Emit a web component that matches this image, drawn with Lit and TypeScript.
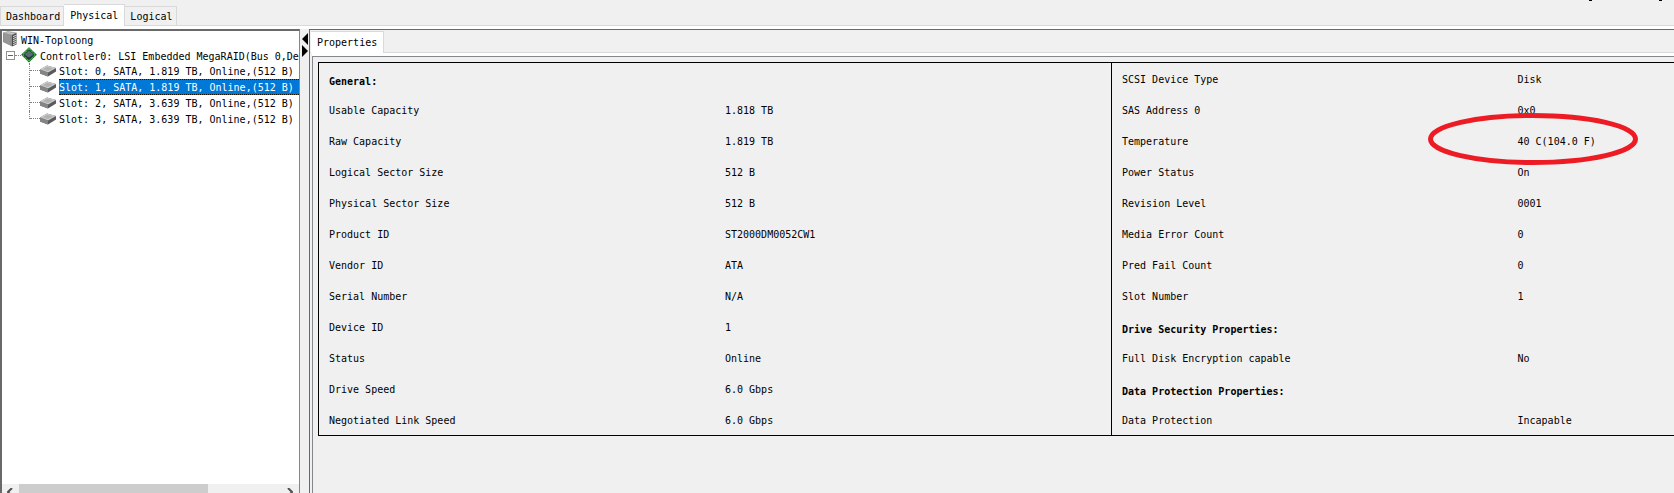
import { LitElement, html, css } from "lit";
import { customElement, state } from "lit/decorators.js";

type Row = { label: string; value?: string; heading?: boolean; marked?: boolean };

const GENERAL: Row[] = [
  { label: "General:", heading: true },
  { label: "Usable Capacity", value: "1.818 TB" },
  { label: "Raw Capacity", value: "1.819 TB" },
  { label: "Logical Sector Size", value: "512 B" },
  { label: "Physical Sector Size", value: "512 B" },
  { label: "Product ID", value: "ST2000DM0052CW1" },
  { label: "Vendor ID", value: "ATA" },
  { label: "Serial Number", value: "N/A" },
  { label: "Device ID", value: "1" },
  { label: "Status", value: "Online" },
  { label: "Drive Speed", value: "6.0 Gbps" },
  { label: "Negotiated Link Speed", value: "6.0 Gbps" },
];

const DETAILS: Row[] = [
  { label: "SCSI Device Type", value: "Disk" },
  { label: "SAS Address 0", value: "0x0" },
  { label: "Temperature", value: "40 C(104.0 F)", marked: true },
  { label: "Power Status", value: "On" },
  { label: "Revision Level", value: "0001" },
  { label: "Media Error Count", value: "0" },
  { label: "Pred Fail Count", value: "0" },
  { label: "Slot Number", value: "1" },
  { label: "Drive Security Properties:", heading: true },
  { label: "Full Disk Encryption capable", value: "No" },
  { label: "Data Protection Properties:", heading: true },
  { label: "Data Protection", value: "Incapable" },
];

const SLOTS = [
  "Slot: 0, SATA, 1.819 TB, Online,(512 B)",
  "Slot: 1, SATA, 1.819 TB, Online,(512 B)",
  "Slot: 2, SATA, 3.639 TB, Online,(512 B)",
  "Slot: 3, SATA, 3.639 TB, Online,(512 B)",
];

const serverIcon = html`<svg width="16" height="16" viewBox="0 0 16 16" aria-hidden="true">
  <path d="M1 2 6 .5 14.500 2 10 4Z" fill="#c6c6c6" stroke="#777" stroke-width=".5" />
  <path d="M1 2 10 4V15.500L1 11Z" fill="#8e8e8e" />
  <path d="M10 4 14.500 2V13.500L10 15.500Z" fill="#4c4c4c" />
  <path d="M11 5.500 14 4.500M11 7.500 14 6.500M11 9.500 14 8.500M11 11.500 14 10.500M11 13.500 14 12.500" stroke="#dedede" />
  <path d="M3 3V11.500M5 3.500V12.500M7 4V13.500" stroke="#a8a8a8" stroke-width=".7" />
</svg>`;

const chipIcon = html`<svg width="16" height="16" viewBox="0 0 16 16" aria-hidden="true">
  <path d="M8 .3 15.800 7.700 8 15.500 .2 7.700Z" fill="#174a1d" />
  <path d="M8 1.500 14.500 7.700 8 14.200 1.500 7.700Z" fill="none" stroke="#43b049" stroke-width="1.400" stroke-dasharray="2.500 .6" />
  <path d="M8 3.500 12.500 7.500V8.500L8 12.500 3.500 8.500V7.500Z" fill="#26383c" />
  <path d="M8 3.500 12.500 7.500 8 10.500 3.500 7.500Z" fill="#566d72" />
</svg>`;

const driveIcon = html`<svg width="16" height="12" viewBox="0 0 16 12" aria-hidden="true">
  <path d="M0 4.500 7 .5 16 3V6.500L8 11.500 0 8.500Z" fill="#5a5a5a" />
  <path d="M0 4.500 7 .5 16 3 8 7.500Z" fill="#d0d0d0" />
  <path d="M2.500 4.500 7.300 1.600 13.300 3.200 8 6.200Z" fill="#b2b2b2" />
  <path d="M0 4.500 8 7.500V11.500L0 8.500Z" fill="#858585" />
</svg>`;

@customElement("app-root")
export class AppRoot extends LitElement {
  @state() private selected = 1;

  static styles = css`
    :host {
      display: flex;
      flex-direction: column;
      height: 100vh;
      overflow: hidden;
      background: #f0f0f0;
      color: #000;
      font: 10px/16px "DejaVu Sans Mono", "Liberation Mono", monospace;
    }
    *, *::before { box-sizing: border-box; }
    button { font: inherit; color: inherit; margin: 0; }
    svg { display: block; flex: none; }
    .tabs {
      display: flex;
      align-items: flex-end;
      flex: none;
      border-bottom: 1px solid #d9d9d9;
    }
    .main-tabs { height: 26px; }
    .tab {
      height: 19px;
      padding: 2px 3px 0 5px;
      border: 1px solid #d9d9d9;
      border-bottom: 0;
      border-left-width: 0;
      background: #f0f0f0;
    }
    .tab:first-child { border-left-width: 1px; }
    .tab.active {
      height: 22px;
      padding: 0 6px;
      margin-bottom: -1px;
      background: #fff;
    }
    .edge-marks { align-self: flex-start; margin-left: auto; padding-right: 12px; display: flex; gap: 67px; }
    .edge-mark { width: 3px; height: 1px; background: #000; }
    .workspace {
      flex: 1;
      min-height: 0;
      display: grid;
      grid-template-columns: 300px 9px minmax(0, 1fr);
      border-top: 3px solid #fff;
    }
    .tree-panel {
      display: flex;
      flex-direction: column;
      min-width: 0;
      overflow: hidden;
      background: #fff;
      border: solid #696969;
      border-width: 2px 1px 0 2px;
      border-right-color: #828790;
    }
    .tree { flex: 1; margin: 0; padding: 0; list-style: none; white-space: nowrap; }
    .node { display: flex; align-items: center; height: 16px; }
    .root-label { padding: 3px 0 0 3px; }
    .controller { padding-left: 4px; }
    .toggle {
      width: 9px;
      height: 9px;
      flex: none;
      padding: 0;
      border: 1px solid #919191;
      background: linear-gradient(#4b63a7, #4b63a7) center / 5px 1px no-repeat #fff;
    }
    .stem { width: 6px; flex: none; border-top: 1px dotted #808080; }
    .controller-label { flex: 1; min-width: 0; overflow: hidden; padding: 3px 0 0 3px; }
    .slots { margin: 0; padding: 0 0 0 27px; list-style: none; }
    .branch { align-self: stretch; width: 11px; flex: none; display: grid; grid-template-rows: 8px 8px; border-left: 1px dotted #808080; }
    .branch::before { content: ""; border-bottom: 1px dotted #808080; }
    .slot:last-child .branch { align-self: flex-start; height: 8px; }
    .slot-button {
      flex: 1;
      height: 16px;
      margin-left: 3px;
      padding: 2px 0 0;
      border: 1px solid transparent;
      border-left: 0;
      border-right: 0;
      background: none;
      line-height: 12px;
      text-align: left;
      white-space: nowrap;
    }
    .slot-button.selected { background: #0078d7; color: #fff; border-color: #201000; border-style: dotted; }
    .scrollbar { display: flex; flex: none; height: 9px; background: #f0f0f0; overflow: hidden; }
    .arrow { width: 17px; height: 17px; flex: none; padding: 4px 5px; border: 0; background: none; }
    .track { flex: 1; }
    .thumb { width: 72%; height: 17px; background: #cdcdcd; }
    .divider { display: flex; flex-direction: column; padding: 4px 0 0 2px; }
    .collapse { width: 6px; height: 12px; padding: 0; border: 0; background: none; }
    .detail {
      display: flex;
      flex-direction: column;
      min-width: 0;
      border: solid #696969;
      border-width: 1px 0 0 1px;
    }
    .detail .tabs { height: 23px; padding-left: 1px; }
    .detail .tab.active { border-left: 0; }
    .sheet {
      flex: 1;
      margin: 3px 0 0 2px;
      padding: 5px 0 0 5px;
      overflow: hidden;
      border: solid #828790;
      border-width: 1px 0 0 1px;
      box-shadow: 0 -3px #fff;
    }
    .frame { display: flex; width: 117%; border: 1px solid #000; }
    .props { flex: 1; width: 50%; table-layout: fixed; border-collapse: collapse; }
    .props + .props { border-left: 1px solid #000; }
    .cell { height: 31px; width: 50%; padding: 2px 0 0 10px; text-align: left; font-weight: normal; }
    .cell.heading { font-weight: bold; padding-top: 6px; }
    .marked { position: relative; }
    .ring { position: absolute; left: -80px; top: -12px; }
  `;

  private table(name: string, rows: Row[]) {
    return html`<table class="props" aria-label=${name}>
      <tbody>
        ${rows.map((r) =>
          r.heading
            ? html`<tr><th class="cell heading" colspan="2" scope="rowgroup">${r.label}</th></tr>`
            : html`<tr>
                <th class="cell" scope="row">${r.label}</th>
                <td class="cell ${r.marked ? "marked" : ""}">
                  ${r.value}${r.marked
                    ? html`<svg class="ring" width="210" height="52" viewBox="0 0 210 52" aria-hidden="true">
                        <ellipse cx="105" cy="26" rx="102.5" ry="23.5" fill="none" stroke="#ed1c24" stroke-width="5" />
                      </svg>`
                    : ""}
                </td>
              </tr>`
        )}
      </tbody>
    </table>`;
  }

  render() {
    return html`
      <nav class="tabs main-tabs" role="tablist" aria-label="Views">
        <button class="tab" role="tab">Dashboard</button>
        <button class="tab active" role="tab" aria-selected="true">Physical</button>
        <button class="tab" role="tab">Logical</button>
        <div class="edge-marks" aria-hidden="true"><span class="edge-mark"></span><span class="edge-mark"></span></div>
      </nav>
      <div class="workspace">
        <aside class="tree-panel">
          <ul class="tree">
            <li>
              <div class="node">${serverIcon}<span class="root-label">WIN-Toploong</span></div>
              <div class="node controller">
                <button class="toggle" aria-label="Collapse controller"></button>
                <span class="stem"></span>${chipIcon}
                <span class="controller-label">Controller0: LSI Embedded MegaRAID(Bus 0,De</span>
              </div>
              <ul class="slots">
                ${SLOTS.map(
                  (s, i) => html`<li class="node slot">
                    <span class="branch"></span>${driveIcon}
                    <button
                      class="slot-button ${i === this.selected ? "selected" : ""}"
                      @click=${() => (this.selected = i)}
                    >${s}</button>
                  </li>`
                )}
              </ul>
            </li>
          </ul>
          <div class="scrollbar">
            <button class="arrow" aria-label="Scroll left">
              <svg width="6" height="9" viewBox="0 0 6 9"><path d="M5 0 1 4 5 8" fill="none" stroke="#505050" stroke-width="2" /></svg>
            </button>
            <div class="track"><div class="thumb"></div></div>
            <button class="arrow" aria-label="Scroll right">
              <svg width="6" height="9" viewBox="0 0 6 9"><path d="M1 0 5 4 1 8" fill="none" stroke="#505050" stroke-width="2" /></svg>
            </button>
          </div>
        </aside>
        <div class="divider">
          <button class="collapse" aria-label="Collapse left"><svg width="6" height="12"><path d="M6 0V12L0 6Z" /></svg></button>
          <button class="collapse" aria-label="Collapse right"><svg width="6" height="12"><path d="M0 0V12L6 6Z" /></svg></button>
        </div>
        <main class="detail">
          <nav class="tabs" role="tablist" aria-label="Details">
            <button class="tab active" role="tab" aria-selected="true">Properties</button>
          </nav>
          <section class="sheet">
            <div class="frame">${this.table("General", GENERAL)}${this.table("Details", DETAILS)}</div>
          </section>
        </main>
      </div>
    `;
  }
}
